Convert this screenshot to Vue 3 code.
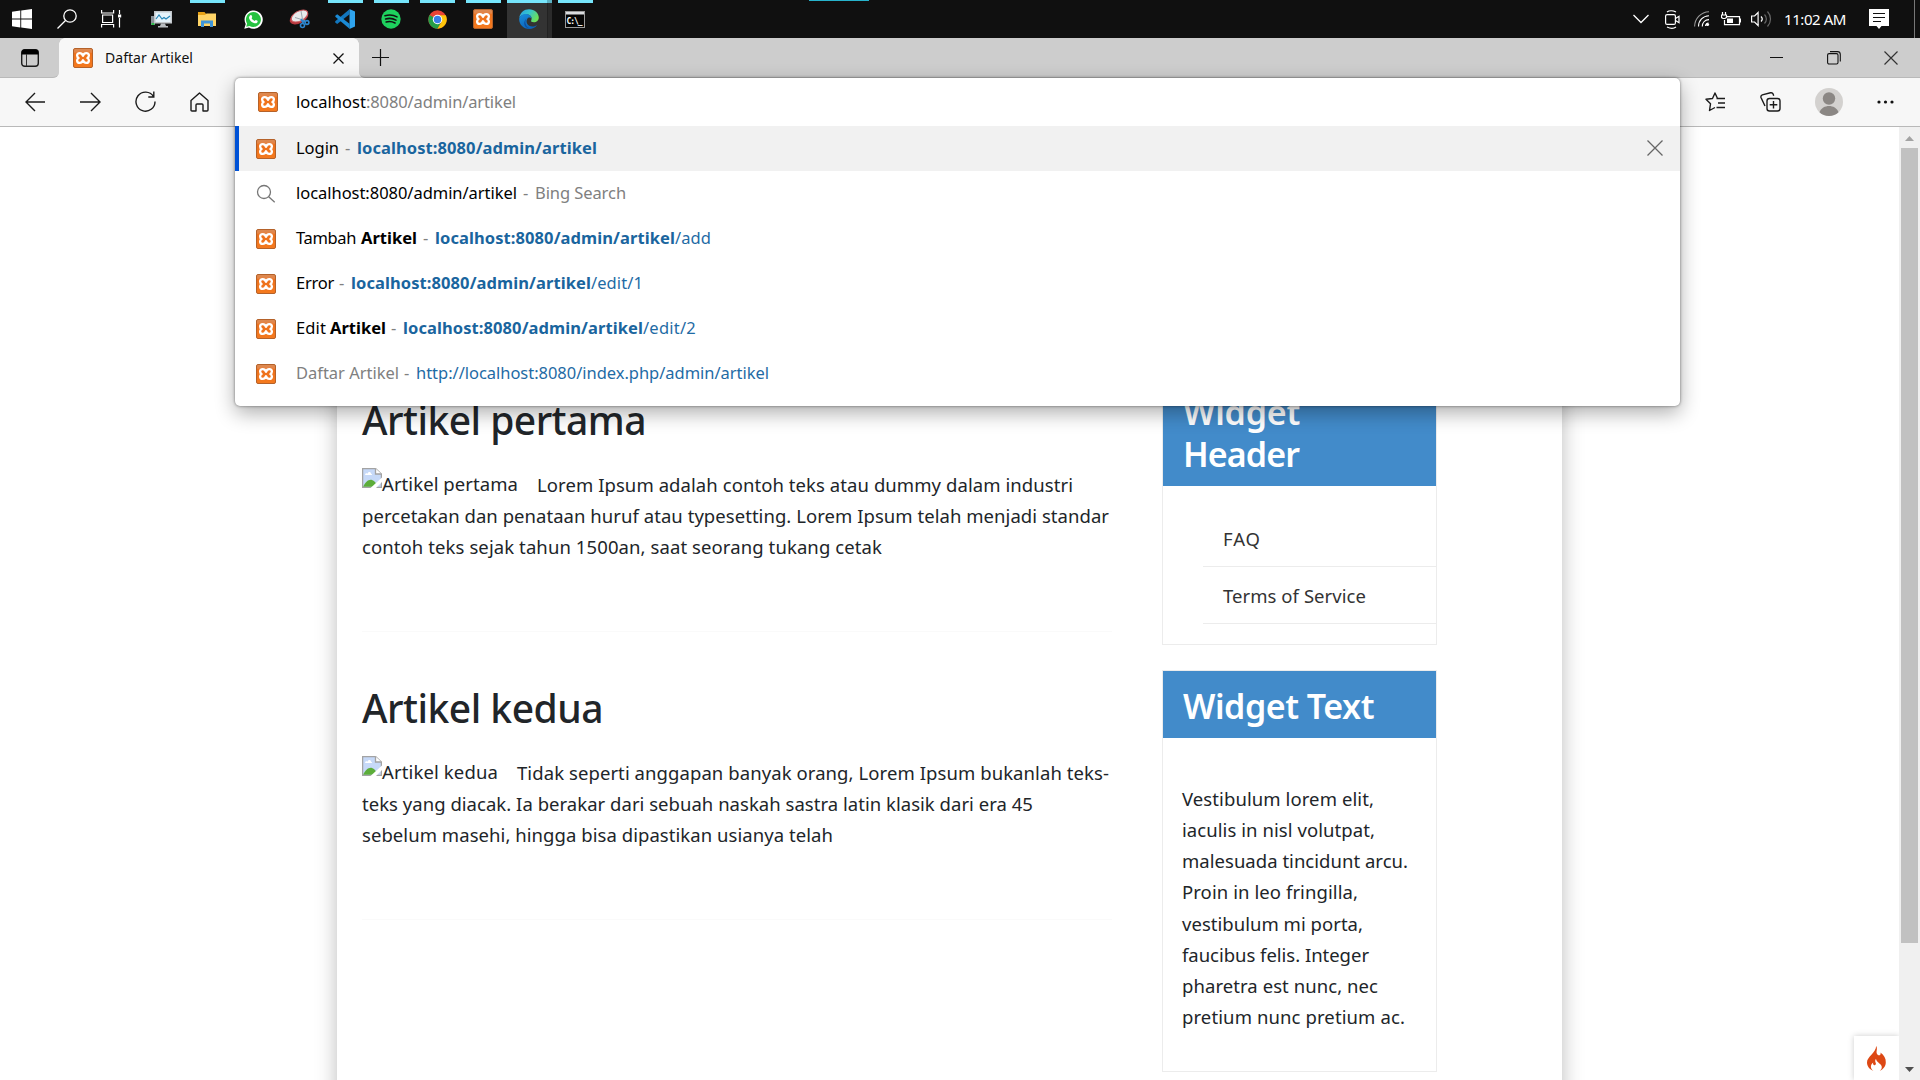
<script setup>
// Spreads the letters of a text run so that it fills the given width in pixels.
const vFit = {
  mounted(el, { value }) {
    const natural = el.getBoundingClientRect().width
    el.style.letterSpacing = (value - natural) / el.textContent.length + 'px'
  },
}

const pinned = [
  { id: 'perf' },
  { id: 'explorer', open: true },
  { id: 'whatsapp' },
  { id: 'snip' },
  { id: 'vscode', open: true },
  { id: 'spotify', open: true },
  { id: 'chrome', open: true },
  { id: 'xampp', open: true },
  { id: 'edge', open: true, active: true },
  { id: 'cmd', open: true },
]

const suggestions = [
  { icon: 'xampp', selected: true, parts: [['Login', 43, 't'], ['-', 6, 'd', 6], ['localhost:8080/admin/artikel', 240, 'u b', 6]] },
  { icon: 'search', parts: [['localhost:8080/admin/artikel', 221, 't'], ['-', 6, 'd', 6], ['Bing Search', 91, 'd', 6]] },
  { icon: 'xampp', parts: [['Tambah', 60, 't'], ['Artikel', 56, 't b', 5], ['-', 6, 'd', 6], ['localhost:8080/admin/artikel', 240, 'u b', 6], ['/add', 36, 'u']] },
  { icon: 'xampp', parts: [['Error', 38, 't'], ['-', 6, 'd', 5], ['localhost:8080/admin/artikel', 240, 'u b', 6], ['/edit/1', 52, 'u']] },
  { icon: 'xampp', parts: [['Edit', 30, 't'], ['Artikel', 56, 't b', 4], ['-', 6, 'd', 5], ['localhost:8080/admin/artikel', 240, 'u b', 6], ['/edit/2', 53, 'u']] },
  { icon: 'xampp', parts: [['Daftar Artikel', 103, 'd'], ['-', 6, 'd', 5], ['http://localhost:8080/index.php/admin/artikel', 353, 'u', 6]] },
]

const articles = [
  {
    title: ['Artikel pertama', 284],
    alt: ['Artikel pertama', 136],
    lines: [
      ['Lorem Ipsum adalah contoh teks atau dummy dalam industri', 536],
      ['percetakan dan penataan huruf atau typesetting. Lorem Ipsum telah menjadi standar', 747],
      ['contoh teks sejak tahun 1500an, saat seorang tukang cetak', 520],
    ],
  },
  {
    title: ['Artikel kedua', 241],
    alt: ['Artikel kedua', 116],
    lines: [
      ['Tidak seperti anggapan banyak orang, Lorem Ipsum bukanlah teks-', 592],
      ['teks yang diacak. Ia berakar dari sebuah naskah sastra latin klasik dari era 45', 671],
      ['sebelum masehi, hingga bisa dipastikan usianya telah', 471],
    ],
  },
]

const widgetText = [
  ['Vestibulum lorem elit,', 192],
  ['iaculis in nisl volutpat,', 193],
  ['malesuada tincidunt arcu.', 226],
  ['Proin in leo fringilla,', 176],
  ['vestibulum mi porta,', 181],
  ['faucibus felis. Integer', 187],
  ['pharetra est nunc, nec', 196],
  ['pretium nunc pretium ac.', 223],
]
</script>

<template>
  <div class="screen">
    <svg class="defs" width="0" height="0">
      <defs>
        <linearGradient id="gx" x1="0" y1="0" x2="0" y2="1">
          <stop offset="0" stop-color="#d98b55" /><stop offset=".2" stop-color="#e58344" />
          <stop offset=".24" stop-color="#ec701c" /><stop offset="1" stop-color="#f57a1e" />
        </linearGradient>
        <linearGradient id="ge1" x1="0" y1="0" x2="1" y2=".5">
          <stop offset="0" stop-color="#2a9fe0" /><stop offset=".5" stop-color="#35c4cf" /><stop offset="1" stop-color="#6be05a" />
        </linearGradient>
        <linearGradient id="ge2" x1="0" y1="0" x2=".6" y2="1">
          <stop offset="0" stop-color="#1a8fdc" /><stop offset="1" stop-color="#0b61b8" />
        </linearGradient>
        <symbol id="i-xampp" viewBox="0 0 20 20">
          <rect x=".5" y=".5" width="19" height="19" rx="1.500" fill="url(#gx)" stroke="#b5622a" />
          <path d="M10 7.700C9.300 6 8.300 5.100 6.800 5.100 4.900 5.100 4.100 6.400 4.100 7.600c0 1 .5 1.900 1.500 2.400-1 .5-1.500 1.400-1.500 2.400 0 1.200.8 2.500 2.700 2.500 1.500 0 2.500-.9 3.200-2.600.7 1.700 1.700 2.600 3.200 2.600 1.900 0 2.700-1.300 2.700-2.500 0-1-.5-1.900-1.500-2.400 1-.5 1.500-1.400 1.500-2.400 0-1.200-.8-2.500-2.700-2.500-1.500 0-2.500.9-3.200 2.600z" fill="none" stroke="#fff" stroke-width="2.300" stroke-linejoin="round" />
        </symbol>
      </defs>
    </svg>

    <header class="taskbar">
      <div class="sys"><svg width="20" height="20" viewBox="0 0 20 20" fill="#fff"><path d="M0 2.800 8.300 1.600v7.900H0zM9.200 1.500 20 0v9.500H9.200zM0 10.400h8.300v8L0 17.200zM9.200 10.400H20V20L9.200 18.500z" /></svg></div>
      <div class="sys"><svg width="20" height="20" viewBox="0 0 20 20" fill="none" stroke="#fff" stroke-width="1.300"><circle cx="13" cy="7" r="6.200" /><path d="M8.500 11.500.5 19.500" /></svg></div>
      <div class="sys view"><svg width="21" height="20" viewBox="0 0 21 20" fill="none" stroke="#fff" stroke-width="1.200"><path d="M.6 1v3h12V1M.6 18.500v-3h12v3M1.600 6h10v7.500h-10zM18.500 1v4M18.500 9v9.500" /><path d="M17 7h3.200" stroke-width="3" /></svg></div>
      <div v-for="p in pinned" :key="p.id" class="app" :class="{ open: p.open, active: p.active }">
        <svg v-if="p.id === 'perf'" width="21" height="20" viewBox="0 0 21 20">
          <path d="M0 7h4v9H0z" fill="#8a9299" /><path d="M.5 14h3v2h-3z" fill="#2fbd4a" />
          <rect x="3" y="2" width="18" height="12.500" fill="#c3c8cc" /><rect x="4.500" y="3.500" width="15" height="9.500" fill="#e5f3fb" />
          <path d="m5 10 3-4 3 4 2-1.500 2 1.500 4-3" fill="none" stroke="#2586b8" stroke-width="1.200" />
          <path d="M10 14.500h4l1 2.500h2v1.500H7V17h2z" fill="#b9bdc1" />
        </svg>
        <svg v-else-if="p.id === 'explorer'" width="18" height="17" viewBox="0 0 18 17">
          <path d="M0 1h6.500l2 2.500H18V14H0z" fill="#e8a317" /><path d="M0 4h7l1.500-1.500H18V15H0z" fill="#ffd567" />
          <path d="M3 16v-6.500h12V16h-3v-3.500H6V16z" fill="#3f95d8" />
        </svg>
        <svg v-else-if="p.id === 'whatsapp'" width="19" height="19" viewBox="0 0 19 19">
          <path d="M.3 18.700 1.700 14A9.100 9.100 0 1 1 5 17.400z" fill="#fff" /><path d="m2.200 16.800.9-3.200a7.500 7.500 0 1 1 2.500 2.400z" fill="#25c240" />
          <path d="M6.300 5.200c.4-.4 1-.4 1.200 0l.7 1.600c.1.400-.5 1-.7 1.300.7 1.300 1.700 2.200 3.100 2.900.4-.2.900-1.200 1.300-1l1.600.8c.3.200.2 1-.2 1.600-.6.700-1.700 1-2.700.8-2.700-.7-4.800-2.600-5.500-5-.2-1.200.4-2.200 1.200-3z" fill="#fff" />
        </svg>
        <svg v-else-if="p.id === 'snip'" width="21" height="20" viewBox="0 0 21 20">
          <ellipse cx="10" cy="8.500" rx="10" ry="5.700" transform="rotate(-28 10 8.500)" fill="#b93a40" /><ellipse cx="10.500" cy="7" rx="9" ry="5" transform="rotate(-28 10.500 7)" fill="#e9eaec" stroke="#c9575c" />
          <path d="m12 2 2 11M6 8.500l10 3" stroke="#a0a7ae" /><g fill="none" stroke="#2d86cf" stroke-width="1.600"><circle cx="13.500" cy="16.500" r="2" /><circle cx="18" cy="13.500" r="1.900" /><path d="m12 10 2.500 4.500M12 11l5 2" /></g>
        </svg>
        <svg v-else-if="p.id === 'vscode'" width="20" height="20" viewBox="0 0 20 20">
          <path d="M14.500.2v5L2.200 15 .2 13.500v-1.300z" fill="#1276bd" /><path d="M.3 6.700 2.200 5.200l12.300 9.500v5.100L.3 7.700z" fill="#1b8ad4" />
          <path d="M14.500 0 20 2.500v15L14.500 20z" fill="#2fa4ee" />
        </svg>
        <svg v-else-if="p.id === 'spotify'" width="20" height="20" viewBox="0 0 20 20">
          <circle cx="10" cy="10" r="9.700" fill="#1ed15e" /><path d="M4 6.800c4-1.200 8.500-.8 12 1.100M4.600 10c3.500-1 7.300-.6 10.400 1.100M5.200 13c3-.8 6-.5 8.800 1" fill="none" stroke="#101010" stroke-width="1.600" stroke-linecap="round" />
        </svg>
        <svg v-else-if="p.id === 'chrome'" width="19" height="19" viewBox="0 0 20 20">
          <circle cx="10" cy="10" r="9.700" fill="#e94335" /><path d="M10 10 1.600 5.200A9.700 9.700 0 0 0 10 19.700l4.200-7.300z" fill="#269e48" />
          <path d="M10 5.500h8.700A9.700 9.700 0 0 1 10 19.700l4.200-7.200z" fill="#fdc50b" /><circle cx="10" cy="10" r="5" fill="#fff" /><circle cx="10" cy="10" r="3.900" fill="#397ee8" />
        </svg>
        <svg v-else-if="p.id === 'xampp'" width="20" height="20"><use href="#i-xampp" /></svg>
        <svg v-else-if="p.id === 'edge'" width="20" height="20" viewBox="0 0 20 20">
          <path d="M.3 8.500C1.200 3.500 5 .2 10 .2c5.700 0 9.800 4 9.800 8.200 0 3-2.200 4.800-4.900 4.800-2.300 0-3.200-.8-2.700-1.700.9-1.600.6-5.300-3.600-5.900C5 5.200 1.800 6.500.3 8.500z" fill="url(#ge1)" />
          <path d="M.2 10.200C.2 7 3.600 4.900 7.200 5c3 .1 5.200 1.900 5.300 4.500-1-1.200-3.200-1.300-4.300.4-1.900 3.200.6 7.300 5 7.500 2 .1 3.800-.6 5-1.500-1.800 2.600-4.800 4-8 4C4.500 19.900.2 15.500.2 10.200z" fill="url(#ge2)" />
          <path d="M7.500 9.500c-2.300 3-1.100 8.400 3.600 10.200-5.600-.2-8-6.200-3.600-10.200z" fill="#0c4fa0" />
        </svg>
        <svg v-else width="20" height="17" viewBox="0 0 20 17">
          <rect x=".5" y=".5" width="19" height="16" fill="#050505" stroke="#9a9a9a" /><path d="M1 1h18v2.500H1z" fill="#dadde0" />
          <text x="1.500" y="12.500" textLength="16" class="cmd">C:\_</text>
        </svg>
      </div>
      <i class="hint"></i>
      <div class="tray">
        <svg width="16" height="10" viewBox="0 0 16 10" fill="none" stroke="#fff" stroke-width="1.300"><path d="m.5 1 7.500 7.500L15.500 1" /></svg>
        <svg class="g16" width="15" height="19" viewBox="0 0 15 19" fill="none" stroke="#fff" stroke-width="1.200"><rect x=".6" y="4.600" width="9.800" height="9.800" rx="1.500" /><path d="m10.500 8.500 3.500-2.200v6.400l-3.500-2.200M2 2C4 .4 8 .4 11 2M2 17c3 1.500 7 1.500 9 0" /></svg>
        <svg class="g14" width="16" height="16" viewBox="0 0 16 16" fill="none" stroke="#fff" stroke-width="1.100"><path d="M.6 15.500C.8 7.500 7 1 15 .8" stroke="#999" /><path d="M4.500 15.500c0-6 4.500-10.700 10.500-10.800M8.300 15.500c0-4 2.700-6.800 6.700-6.900" /><circle cx="13.500" cy="13.500" r="1.600" fill="#fff" stroke="none" /><path d="M11.500 15c0-1.500 1.500-3 3-3" /></svg>
        <svg class="g11" width="20" height="15" viewBox="0 0 20 15" fill="none" stroke="#fff" stroke-width="1.200"><path d="M5.500 4.600h13v8H3.500V8M18.500 7h1v3h-1M1.500 0v3M4.500 0v3M.5 3h5v2.500l-1.500 1h-2L.5 5.500z" /><path d="M6 6.500h6v4.500H6z" fill="#fff" stroke="none" /></svg>
        <svg class="g10" width="21" height="18" viewBox="0 0 21 18" fill="none" stroke="#fff" stroke-width="1.200"><path d="M.6 6h3l3.500-3.500v13L3.600 12h-3zM10 6.500c1.500 1.500 1.500 3.500 0 5" /><path d="M13.500 4.500c2.500 2.600 2.500 6.400 0 9M16.500 1.500c4 4.300 4 10.700 0 15" stroke="#666" /></svg>
        <span v-fit="62" class="clock g12">11:02 AM</span>
        <svg class="g23" width="20" height="20" viewBox="0 0 20 20"><path d="M0 0h20v17h-7.500L10 20l-2.500-3H0z" fill="#fff" /><path d="M4 4.500h12M4 8.500h12M4 12.500h8" stroke="#101010" stroke-width="1.200" /></svg>
      </div>
    </header>

    <nav class="tabs">
      <div class="actions"><svg width="18" height="18" viewBox="0 0 18 18"><rect x=".7" y=".7" width="16.600" height="16.600" rx="3" fill="none" stroke="#1c1c1c" stroke-width="1.400" /><path d="M.7 5.500V3.500a3 3 0 0 1 3-3h10.600a3 3 0 0 1 3 3v2z" /><path d="M5.500 5v12" stroke="#333" /></svg></div>
      <div class="tab">
        <svg width="20" height="20"><use href="#i-xampp" /></svg>
        <span v-fit="88" class="tabname">Daftar Artikel</span>
        <svg class="x" width="11" height="11" viewBox="0 0 11 11" stroke="#111" stroke-width="1.300"><path d="m.5.5 10 10M10.500.5l-10 10" /></svg>
      </div>
      <div class="rest">
        <svg width="18" height="18" viewBox="0 0 18 18" stroke="#111" stroke-width="1.200"><path d="M0 8.500h17M8.500 0v17" /></svg>
        <div class="win">
          <svg width="14" height="14" viewBox="0 0 14 14" stroke="#111"><path d="M0 6.500h13" /></svg>
          <svg width="14" height="14" viewBox="0 0 14 14" fill="none" stroke="#111" stroke-width="1.100"><rect x=".6" y="2.600" width="10.400" height="10.400" rx="1.500" /><path d="M3 .6h7.500a2.800 2.800 0 0 1 2.800 2.800V10.500" /></svg>
          <svg width="14" height="14" viewBox="0 0 14 14" stroke="#333" stroke-width="1.200"><path d="m.5.5 13 13M13.500.5l-13 13" /></svg>
        </div>
      </div>
    </nav>

    <div class="toolbar">
      <div class="nav">
        <svg width="21" height="20" viewBox="0 0 21 20"><path d="M20 10H1M10 1 1 10l9 9" /></svg>
        <svg width="21" height="20" viewBox="0 0 21 20"><path d="M0 10h19M11 1l9 9-9 9" /></svg>
        <svg width="21" height="21" viewBox="0 0 21 21"><path d="M18.500 5.500A9.500 9.500 0 1 0 20 10.500M18.800.5v5.500h-5.500" /></svg>
        <svg width="19" height="20" viewBox="0 0 19 20"><path d="M1 8.500 9.500 1 18 8.500V18q0 1-1 1h-4v-6q0-1-1-1H7q-1 0-1 1v6H2q-1 0-1-1z" stroke-linejoin="round" /></svg>
      </div>
      <div class="tools">
        <svg width="21" height="20" viewBox="0 0 21 20"><path d="M11.500 6.500H20M13 11h7M11.500 15.500H20M14 6.500h-1.500L10 1 7.500 6.500 1 7.300l4.500 4.500-1 6.700 5.500-3" stroke-linejoin="round" /></svg>
        <svg width="21" height="20" viewBox="0 0 21 20"><rect x="7" y="6.500" width="13" height="12.500" rx="2.500" /><path d="M13.500 9v7.500M9.700 12.700h7.600M5 14 1 5.500q-.5-2 1.300-2.700L10.500.8q2-.4 2.600 1.300l.6 1.700" /></svg>
        <svg class="avatar" width="28" height="28" viewBox="0 0 28 28"><circle cx="14" cy="14" r="14" fill="#d3d1cf" /><circle cx="14" cy="10.500" r="6.200" fill="#8b8784" /><path d="M4.500 24.200C6 20 10 18 14 18s8 2 9.500 6.200A14 14 0 0 1 4.500 24.200z" fill="#8b8784" /></svg>
        <svg class="dots" width="17" height="4" viewBox="0 0 17 4"><circle cx="2" cy="2" r="1.600" /><circle cx="8.500" cy="2" r="1.600" /><circle cx="15" cy="2" r="1.600" /></svg>
      </div>
    </div>

    <div class="view-area">
      <div class="page">
        <div class="container">
          <main>
            <article v-for="a in articles" :key="a.title[0]">
              <h2><span v-fit="a.title[1]">{{ a.title[0] }}</span></h2>
              <div class="body">
                <div class="line">
                  <span class="broken">
                    <svg width="20" height="20" viewBox="0 0 20 20"><path d="M.6.6h13L19.400 6v13.400H.6z" fill="#c6d9f8" stroke="#a3a3a3" stroke-width="1.300" /><path d="M3 6.500c.5-1.600 2-1.600 2.500-.8.700-2.500 3.500-2 3.500 0 1.200-.2 1.500 1.300.5 1.300H3.500z" fill="#fff" /><path d="M1.200 18.800C3 14 7 11 10 12s4 3 5 6.800z" fill="#5cad3a" /><path d="M13.500.6V6h6" fill="#fff" stroke="#a3a3a3" stroke-width="1.300" /><path d="M8.500 20 20 9.500V14l-6 6z" fill="#fff" /></svg>
                    <span v-fit="a.alt[1]">{{ a.alt[0] }}</span>
                  </span>
                  <span v-fit="a.lines[0][1]">{{ a.lines[0][0] }}</span>
                </div>
                <div v-for="l in a.lines.slice(1)" :key="l[0]" class="line"><span v-fit="l[1]">{{ l[0] }}</span></div>
              </div>
            </article>
          </main>
          <aside>
            <section class="widget">
              <h3><span v-fit="117">Widget</span><br><span v-fit="116">Header</span></h3>
              <ul>
                <li><span v-fit="38">FAQ</span></li>
                <li><span v-fit="143">Terms of Service</span></li>
              </ul>
            </section>
            <section class="widget">
              <h3><span v-fit="191">Widget Text</span></h3>
              <div class="wtext"><div v-for="l in widgetText" :key="l[0]" class="line"><span v-fit="l[1]">{{ l[0] }}</span></div></div>
            </section>
          </aside>
        </div>
        <div class="flame"><svg width="19" height="25" viewBox="0 0 19 25"><path d="M9.200 0c1.600 3-.2 5 .6 7.500.6 1.900 2.700 2.200 3.500 1.200.5-.8.400-1.500.1-2.200C17 9 19 12.500 18.800 16.500c-.1 3.800-2.600 6.900-6 8.300 2-1.600 2.600-3.800 1.400-5.600-1.100-1.700-4.700-3.200-5.200-6.500-1.400 1.500-.7 3.300-.2 4.400.5 1.600-.8 2.500-1.900 1.900-.9-.5-1-1.500-.7-2.500-3.300 2.500-2.800 6.200.2 8.300C2.800 23.500 0 20.500 0 16.500 0 10.500 8.800 7.200 9.200 0z" fill="#dd4814" /></svg></div>
      </div>
      <div class="scroll">
        <svg width="9" height="5" viewBox="0 0 9 5"><path d="M4.500 0 9 5H0z" fill="#a3a3a3" /></svg>
        <div class="thumb"></div>
        <svg width="9" height="5" viewBox="0 0 9 5"><path d="M0 0h9L4.500 5z" fill="#505050" /></svg>
      </div>
    </div>

    <div class="popup">
      <div class="address"><svg width="20" height="20"><use href="#i-xampp" /></svg><span v-fit="70" class="t">localhost</span><span v-fit="150" class="d">:8080/admin/artikel</span></div>
      <div v-for="(s, i) in suggestions" :key="i" class="row" :class="{ selected: s.selected }">
        <svg v-if="s.icon === 'xampp'" class="ico" width="20" height="20"><use href="#i-xampp" /></svg>
        <svg v-else class="ico" width="20" height="20" viewBox="0 0 20 20" fill="none" stroke="#767676" stroke-width="1.300"><circle cx="8" cy="8" r="6.500" /><path d="m12.700 12.700 6 5.500" /></svg>
        <span v-for="(p, j) in s.parts" :key="j" v-fit="p[1]" :class="[p[2], p[3] ? 'gap' + p[3] : '']">{{ p[0] }}</span>
        <svg v-if="s.selected" class="x" width="16" height="16" viewBox="0 0 16 16" stroke="#666" stroke-width="1.300"><path d="m.5.5 15 15M15.500.5l-15 15" /></svg>
      </div>
    </div>
  </div>
</template>

<style>
html, body { margin: 0; overflow: hidden; background: #fff; }
</style>

<style scoped>
.screen { position: relative; display: flex; flex-direction: column; width: 1920px; height: 1080px; overflow: hidden; background: #fff; color: #212529; font-family: "Noto Sans", "Open Sans", sans-serif; }
.screen * { box-sizing: border-box; }
svg { display: block; flex: none; }
span { white-space: nowrap; }
.defs { position: absolute; }

.taskbar { position: relative; display: flex; flex: none; height: 38px; background: #101010; }
.sys { display: flex; align-items: center; justify-content: center; width: 45px; }
.sys:first-child { width: 44px; }
.view { margin-right: 4px; }
.app { position: relative; display: flex; align-items: center; justify-content: center; width: 46px; }
.app.open::before { content: ""; position: absolute; top: 0; left: 6px; width: 35px; height: 3px; background: #76e5fb; }
.app.active { background: linear-gradient(90deg, #333 0 40px, #222 40px 41px, #2b2b2b 41px) 1px 0 / 45px 38px no-repeat; }
.app.active::before { left: 1px; width: 45px; background: linear-gradient(90deg, #76e5fb 40px, #5bb2c4 40px); }
.cmd { font: bold 8px "DejaVu Sans Mono", monospace; fill: #fff; }
.hint { position: absolute; top: 0; left: 809px; width: 60px; height: 1px; background: #27b3cc; }
.tray { display: flex; align-items: center; margin-left: auto; margin-right: 5px; padding-right: 25px; border-right: 1px solid #777; }
.g10 { margin-left: 10px; }
.g11 { margin-left: 11px; }
.g12 { margin-left: 12px; }
.g14 { margin-left: 14px; }
.g16 { margin-left: 16px; }
.g23 { margin-left: 23px; }
.clock { color: #fff; font-size: 15px; line-height: 20px; }

.tabs { display: flex; flex: none; height: 40px; background: #f7f7f7; }
.actions { display: flex; align-items: center; width: 59px; padding-left: 21px; background: #cdcdcd; border-radius: 0 0 6px 0; border-bottom: 1px solid #b9b9b9; }
.tab { display: flex; align-items: center; width: 300px; padding: 0 15px 0 14px; background: #f7f7f7; position: relative; }
.tab::before, .tab::after { content: ""; position: absolute; top: 0; width: 6px; height: 6px; }
.tab::before { left: 0; background: radial-gradient(circle at 6px 6px, #f7f7f7 5.500px, #cdcdcd 6px); }
.tab::after { right: 0; background: radial-gradient(circle at 0 6px, #f7f7f7 5.500px, #cdcdcd 6px); }
.tabname { margin-left: 12px; color: #111; font-size: 14px; line-height: 20px; }
.tab .x { margin-left: auto; }
.rest { display: flex; flex: 1; align-items: center; padding: 0 22px 0 13px; background: #cdcdcd; border-radius: 0 0 0 6px; border-bottom: 1px solid #b9b9b9; }
.win { display: flex; gap: 43px; margin-left: auto; }

.toolbar { display: flex; flex: none; align-items: center; justify-content: space-between; height: 49px; padding: 0 26px 0 25px; background: #f7f7f7; border-bottom: 1px solid #b9b9b9; fill: none; stroke: #1b1b1b; stroke-width: 1.400; }
.nav { display: flex; align-items: center; gap: 34px; padding-bottom: 1px; }
.tools { display: flex; align-items: center; gap: 34px; }
.avatar { stroke: none; }
.dots { fill: #111; stroke: none; }

.view-area { display: flex; flex: 1; min-height: 0; }
.page { position: relative; flex: 1; overflow: hidden; background: #fff; }
.container { display: flex; justify-content: space-between; width: 1225px; height: 1100px; margin-left: 337px; padding: 249px 125px 0 25px; background: #fff; box-shadow: 0 0 20px #bbb; }
main { width: 750px; padding-top: 20px; }
article { height: 288px; }
h2 { margin: 0 0 24.500px; font-size: 39px; font-weight: 500; line-height: 48px; }
.body { height: 163.500px; border-bottom: 1px solid #fafafa; font-size: 18.500px; }
.line { display: flex; height: 31.250px; line-height: 31.250px; }
.broken { display: flex; margin-right: 19px; line-height: 29px; }
.broken svg { margin-top: -1px; }

aside { width: 275px; }
.widget { margin-bottom: 25px; border: 1px solid #ececec; font-size: 18.500px; }
h3 { margin: 0; padding: 13.500px 20px 11.500px; background: #428bca; color: #fff; font-size: 34px; font-weight: 600; line-height: 42px; }
ul { margin: 0; padding: 24px 0 20px 40px; list-style: none; }
li { height: 57px; padding: 13px 20px 0; border-bottom: 1px solid #ececec; color: #333; line-height: 31px; }
.wtext { height: 333px; padding: 44.500px 19px 0; }

.flame { position: absolute; right: 0; bottom: 0; display: flex; justify-content: center; width: 45px; height: 44px; padding-top: 10px; background: #fff; box-shadow: 0 0 6px #ccc; }
.scroll { display: flex; flex-direction: column; flex: none; align-items: center; width: 21px; padding: 9px 0 8px; background: #f0f0f0; }
.thumb { width: 17px; height: 795px; margin: 7px 0 auto; background: #c1c1c1; }

.popup { position: absolute; top: 78px; left: 235px; width: 1445px; height: 328px; background: #fff; border-radius: 5px; box-shadow: 0 7px 20px rgba(0, 0, 0, .32), 0 0 3px rgba(0, 0, 0, .5); font-size: 16.500px; line-height: 24px; }
.address { display: flex; align-items: center; height: 48px; padding-left: 23px; }
.address svg { margin-right: 18px; }
.row { display: flex; align-items: center; height: 45px; padding: 0 17px 2px 21px; }
.ico { position: relative; top: 1px; margin-right: 20px; }
.selected { background: #f1f1f1; box-shadow: inset 4px 0 #0052d6; }
.row .x { margin-left: auto; }
.t { color: #000; }
.d { color: #808080; }
.u { color: #1f6ba5; }
.b { font-weight: 700; }
.u.b { color: #1a659e; }
.gap4 { margin-left: 4px; }
.gap5 { margin-left: 5px; }
.gap6 { margin-left: 6px; }
</style>
